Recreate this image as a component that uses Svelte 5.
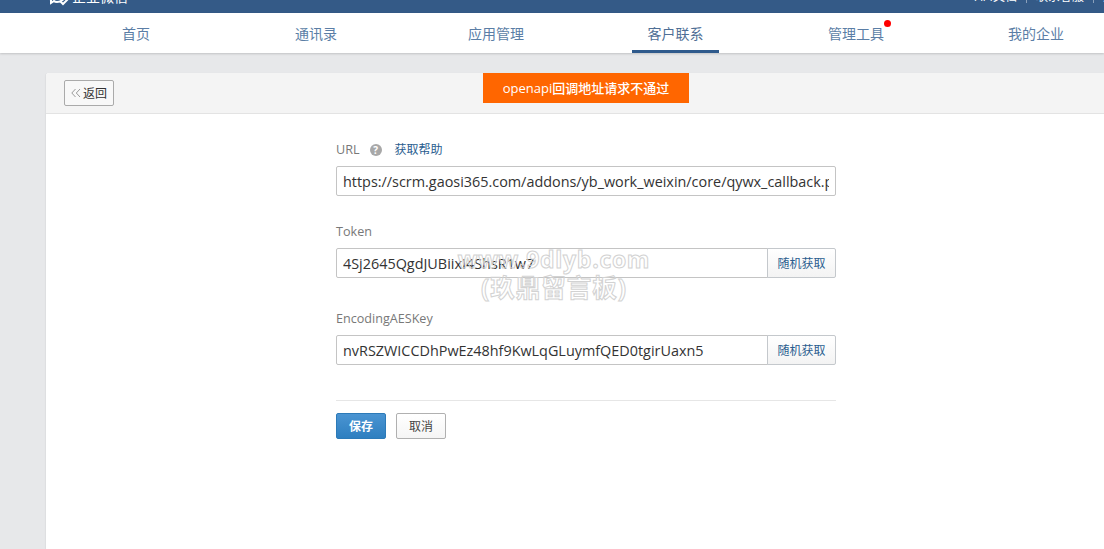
<script>
  const tabs = [
    { label: '首页' },
    { label: '通讯录' },
    { label: '应用管理' },
    { label: '客户联系', active: true },
    { label: '管理工具', dot: true },
    { label: '我的企业' }
  ];
  const secretFields = [
    { label: 'Token', value: '4Sj2645QgdJUBiixI4ShsR1w7' },
    { label: 'EncodingAESKey', value: 'nvRSZWICCDhPwEz48hf9KwLqGLuymfQED0tgirUaxn5' }
  ];
</script>

<div class="page">
  <header class="topbar">
    <div class="brand">
      <svg width="24" height="24" viewBox="0 0 24 24" fill="none" stroke="#fff" stroke-width="2">
        <path d="M2 8c0-4 4-7 8-7s8 3 8 7-4 7-8 7c-1 0-2 0-3-1l-3 2 0-3c-1-1-2-3-2-5z" />
        <path d="M13 14l3 3 5-5" />
      </svg>
      <span>企业微信</span>
    </div>
    <div class="toplinks">
      <span>API文档</span><i></i><span>联系客服</span><i></i><span>退出</span>
    </div>
  </header>

  <nav class="tabs">
    {#each tabs as tab}
      <div class="tab">
        <span class="tab-label" class:active={tab.active}>
          {tab.label}
          {#if tab.dot}<b class="dot"></b>{/if}
        </span>
      </div>
    {/each}
  </nav>

  <main class="card">
    <div class="card-head">
      <button type="button" class="back">
        <svg width="10" height="10" viewBox="0 0 10 10" fill="none" stroke="#999" stroke-width="1">
          <path d="M4.5 1L0.8 5l3.7 4M9 1L5.3 5 9 9" />
        </svg>
        返回
      </button>
      <div class="toast">openapi回调地址请求不通过</div>
    </div>

    <form class="form">
      <div class="field first">
        <div class="label">
          URL
          <span class="help">?</span>
          <span class="help-link">获取帮助</span>
        </div>
        <input value="https://scrm.gaosi365.com/addons/yb_work_weixin/core/qywx_callback.php" />
      </div>

      {#each secretFields as field}
        <div class="field">
          <div class="label">{field.label}</div>
          <div class="group">
            <input value={field.value} />
            <button type="button" class="random">随机获取</button>
          </div>
        </div>
      {/each}

      <div class="actions">
        <button type="button" class="save">保存</button>
        <button type="button" class="cancel">取消</button>
      </div>
    </form>

    <div class="watermark">
      <div class="wm-url">www.9dlyb.com</div>
      <div class="wm-name">(玖鼎留言板)</div>
    </div>
  </main>
</div>

<style>
  :global(body) {
    margin: 0;
    background: #e7e8ea;
    overflow: hidden;
  }

  .page {
    height: 549px;
    overflow: hidden;
    display: flex;
    flex-direction: column;
    font-family: "Open Sans", "Noto Sans CJK SC", sans-serif;
    font-size: 12px;
  }

  .topbar {
    height: 13px;
    flex: none;
    background: #345a87;
    color: #fff;
    display: flex;
    justify-content: space-between;
    align-items: flex-end;
    overflow: hidden;
    padding-left: 47px;
  }

  .brand {
    display: flex;
    align-items: center;
    gap: 1px;
    font-size: 14px;
    line-height: 24px;
    margin-bottom: 2px;
    flex: none;
  }

  .brand svg {
    margin-top: 4px;
  }

  .toplinks {
    display: flex;
    align-items: center;
    gap: 9px;
    font-size: 12px;
    line-height: 18px;
    margin-bottom: 7px;
    margin-right: -23px;
    flex: none;
  }

  .toplinks i {
    width: 1px;
    height: 11px;
    background: #8aa0bb;
  }

  .tabs {
    height: 40px;
    flex: none;
    background: #fff;
    box-shadow: 0 1px 2px rgba(0, 0, 0, 0.16);
    display: grid;
    grid-template-columns: repeat(6, 180px);
    padding-left: 46px;
    position: relative;
  }

  .tab {
    padding-left: 46px;
  }

  .tab-label {
    display: block;
    position: relative;
    width: 88px;
    height: 40px;
    text-align: center;
    font-size: 14px;
    line-height: 41px;
    color: #5b7ea6;
    box-sizing: border-box;
  }

  .tab-label.active {
    color: #4f6f96;
    border-bottom: 3px solid #2f5a8c;
    width: 87px;
  }

  .dot {
    position: absolute;
    top: 7px;
    right: 9px;
    width: 7px;
    height: 7px;
    border-radius: 50%;
    background: #f00;
  }

  .card {
    position: relative;
    flex: 1;
    margin: 20px 0 0 46px;
    background: #fff;
    border-radius: 3px 0 0 0;
    box-shadow: -1px 0 1px rgba(0, 0, 0, 0.04);
  }

  .card-head {
    position: relative;
    box-sizing: border-box;
    height: 41px;
    background: #f4f4f4;
    border-bottom: 1px solid #e3e3e3;
    border-radius: 3px 0 0 0;
    display: flex;
    align-items: center;
    padding-left: 18px;
  }

  button {
    font-family: inherit;
    cursor: pointer;
    box-sizing: border-box;
  }

  .back {
    width: 50px;
    height: 26px;
    padding: 0;
    display: flex;
    align-items: center;
    justify-content: center;
    gap: 2px;
    margin-top: -1px;
    font-size: 12px;
    color: #333;
    background: #f8f8f8;
    border: 1px solid #aaa;
    border-radius: 2px;
  }

  .toast {
    position: absolute;
    left: 437px;
    top: 0;
    width: 206px;
    height: 30px;
    line-height: 30px;
    text-align: center;
    background: #f60;
    color: #fff;
    font-size: 13px;
    font-weight: 500;
  }

  .form {
    width: 500px;
    margin-left: 290px;
    padding-top: 26px;
  }

  .field {
    margin-top: 31px;
  }

  .field.first {
    margin-top: 0;
  }

  .field.first + .field {
    margin-top: 26px;
  }

  .label {
    height: 20px;
    line-height: 20px;
    margin-bottom: 6px;
    color: #787878;
    font-size: 12.6px;
    display: flex;
    align-items: center;
  }

  .help {
    width: 12px;
    height: 12px;
    margin: 0 13px 0 10px;
    border-radius: 50%;
    background: #a8a8a8;
    color: #fff;
    font-size: 10px;
    font-weight: 700;
    line-height: 12px;
    text-align: center;
  }

  .help-link {
    color: #2a5d8f;
    font-size: 12px;
  }

  input {
    display: block;
    box-sizing: border-box;
    width: 100%;
    height: 30px;
    padding: 0 6px;
    border: 1px solid #c4c4c4;
    border-radius: 2px;
    background: #fff;
    color: #333;
    font-family: inherit;
    font-size: 14.4px;
    outline: none;
  }

  .group {
    display: flex;
  }

  .group input {
    flex: 1;
    min-width: 0;
    border-radius: 2px 0 0 2px;
  }

  .random {
    width: 69px;
    height: 30px;
    flex: none;
    padding: 0;
    margin-left: -1px;
    font-size: 12px;
    color: #2a5d8f;
    background: linear-gradient(#fff, #f3f3f3);
    border: 1px solid #c4c8cc;
    border-radius: 0 2px 2px 0;
  }

  .actions {
    margin-top: 35px;
    padding-top: 12px;
    border-top: 1px solid #e6e6e6;
    display: flex;
    gap: 10px;
  }

  .actions button {
    width: 50px;
    height: 26px;
    padding: 0;
    font-size: 12px;
    border-radius: 2px;
  }

  .save {
    color: #fff;
    font-weight: 600;
    background: linear-gradient(#4a94d2, #2e7fc0);
    border: 1px solid #2c7ab8;
  }

  .cancel {
    color: #444;
    background: linear-gradient(#fff, #f5f5f5);
    border: 1px solid #b0b0b0;
  }

  /* hollow letters: the field text underneath stays readable */
  .watermark {
    position: absolute;
    left: 388px;
    top: 173px;
    width: 240px;
    text-align: center;
    font-weight: 700;
    color: transparent;
    -webkit-text-stroke: 1px #d2d2d2;
    pointer-events: none;
  }

  .wm-url {
    font-size: 23px;
    line-height: 27px;
    letter-spacing: 0.7px;
  }

  .wm-name {
    font-size: 24.5px;
    line-height: 29px;
    letter-spacing: 1px;
  }
</style>
